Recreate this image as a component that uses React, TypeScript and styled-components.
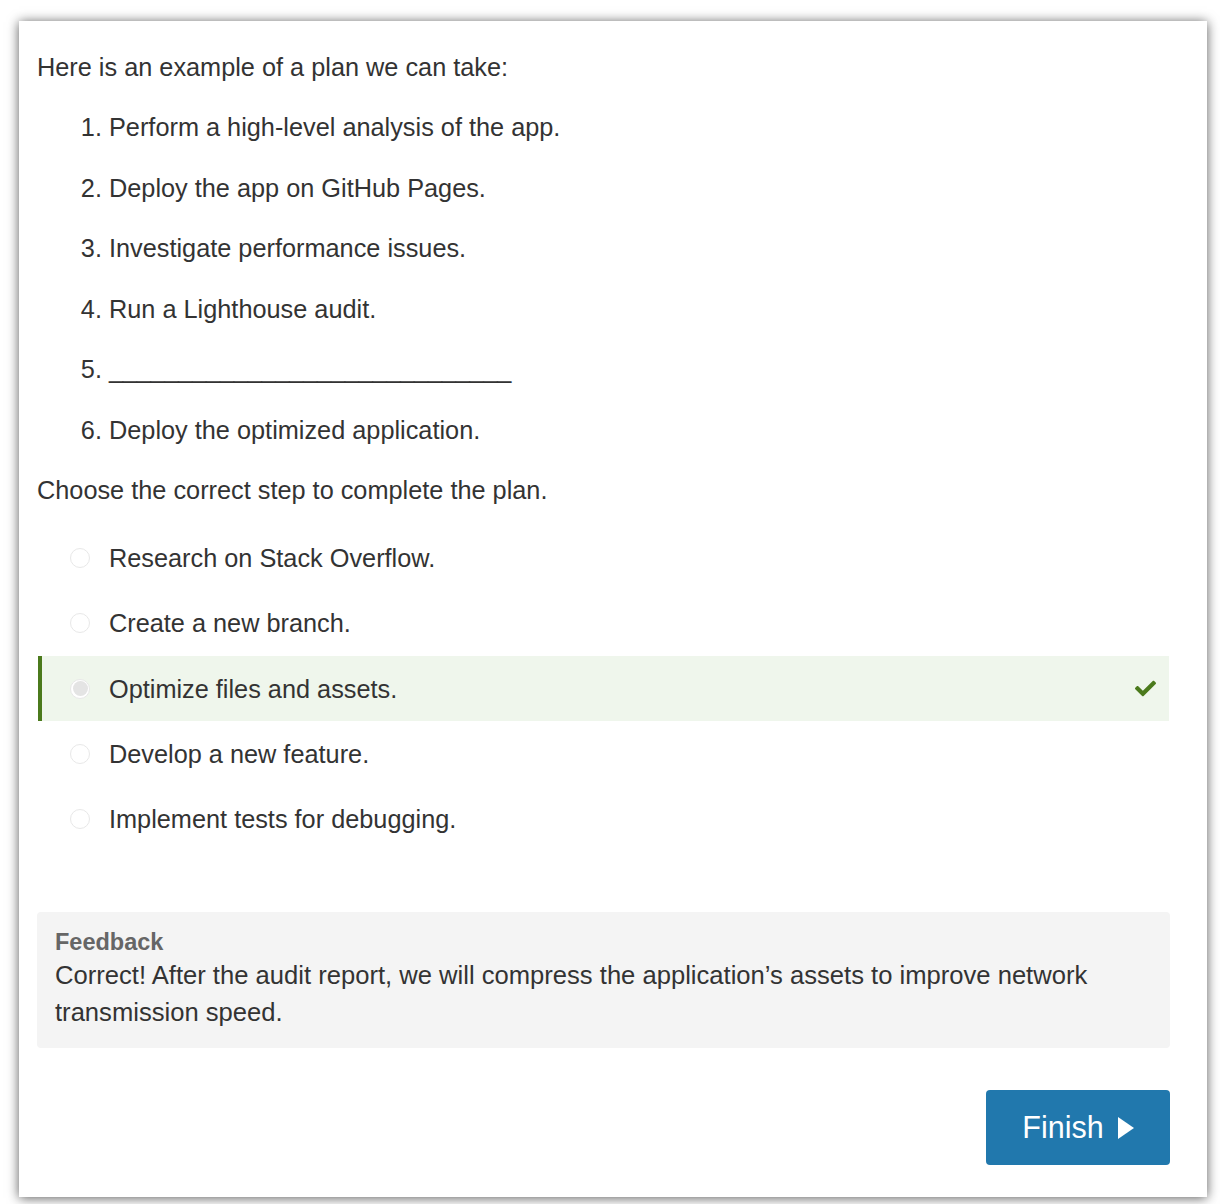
import React from 'react';
import styled, { createGlobalStyle } from 'styled-components';

// --------------- Data ---------------
const steps = [
  'Perform a high-level analysis of the app.',
  'Deploy the app on GitHub Pages.',
  'Investigate performance issues.',
  'Run a Lighthouse audit.',
  null,
  'Deploy the optimized application.',
];

const options = [
  { id: 'a', label: 'Research on Stack Overflow.', correct: false },
  { id: 'b', label: 'Create a new branch.', correct: false },
  { id: 'c', label: 'Optimize files and assets.', correct: true },
  { id: 'd', label: 'Develop a new feature.', correct: false },
  { id: 'e', label: 'Implement tests for debugging.', correct: false },
];

// --------------- Function ---------------
export default function App(): JSX.Element {
  return (
    <>
      <GlobalStyle />
      <Card_section>
        <Text_p>Here is an example of a plan we can take:</Text_p>
        <Steps_ol>
          {steps.map((step, i) => (
            <Step_li key={i}>
              {step ?? <Blank_span>_____________________________</Blank_span>}
            </Step_li>
          ))}
        </Steps_ol>
        <Text_p>Choose the correct step to complete the plan.</Text_p>

        <Options_ul>
          {options.map((opt) => (
            <Option_li key={opt.id} $correct={opt.correct}>
              <Radio_span $checked={opt.correct} />
              <OptionLabel_span>{opt.label}</OptionLabel_span>
              {opt.correct && (
                <Check_svg viewBox='0 0 512 512' aria-hidden='true'>
                  <path d='M173.9 439.4l-166.4-166.4c-10-10-10-26.2 0-36.2l36.2-36.2c10-10 26.2-10 36.2 0L192 312.7 432.1 72.6c10-10 26.2-10 36.2 0l36.2 36.2c10 10 10 26.2 0 36.2L210.1 439.4c-10 10-26.2 10-36.2 0z' />
                </Check_svg>
              )}
            </Option_li>
          ))}
        </Options_ul>

        <Feedback_div>
          <FeedbackTitle_h4>Feedback</FeedbackTitle_h4>
          <FeedbackText_p>
            Correct! After the audit report, we will compress the application’s assets to improve
            network transmission speed.
          </FeedbackText_p>
        </Feedback_div>

        <Footer_div>
          <Finish_button type='button'>
            Finish
            <Caret_svg viewBox='0 0 16 22' aria-hidden='true'>
              <path d='M0 0 L16 11 L0 22 Z' />
            </Caret_svg>
          </Finish_button>
        </Footer_div>
      </Card_section>
    </>
  );
}

// --------------- Style ---------------
const GlobalStyle = createGlobalStyle`
  html, body {
    margin: 0;
    padding: 0;
    background: #fff;
  }
  body {
    font-family: "Liberation Sans", Arial, Helvetica, sans-serif;
    color: #333;
  }
  * {
    box-sizing: border-box;
  }
`;

const Card_section = styled.section`
  width: 1188px;
  margin: 21px 0 8px 19px;
  padding: 28px 37px 32px 18px;
  background: #fff;
  box-shadow: 0 1px 11px rgba(0, 0, 0, 0.65);
  font-size: 25.3px;
  line-height: 36px;
`;

const Text_p = styled.p`
  margin: 0 0 24px;
`;

const Steps_ol = styled.ol`
  margin: 0;
  padding-left: 72px;
`;

const Step_li = styled.li`
  margin-bottom: 24.5px;
`;

const Blank_span = styled.span`
  letter-spacing: -0.2px;
`;

const Options_ul = styled.ul`
  list-style: none;
  margin: -6.5px 0 0;
  padding: 0;
`;

const Option_li = styled.li<{ $correct: boolean }>`
  display: flex;
  align-items: center;
  height: 65.3px;
  margin-left: 1px;
  margin-right: 1px;
  padding: 0 13px 0 28px;
  border-left: 4px solid ${({ $correct }) => ($correct ? '#4b7a1c' : 'transparent')};
  background: ${({ $correct }) => ($correct ? '#eff6ec' : 'transparent')};
`;

const Radio_span = styled.span<{ $checked: boolean }>`
  position: relative;
  flex: none;
  width: 20px;
  height: 20px;
  margin-right: 19px;
  border-radius: 50%;
  border: 1.5px solid #e8e8e8;
  background: #fff;
  &::after {
    content: '';
    display: ${({ $checked }) => ($checked ? 'block' : 'none')};
    position: absolute;
    inset: 1.5px;
    border-radius: 50%;
    background: #e4e4e4;
  }
`;

const OptionLabel_span = styled.span`
  flex: 1;
`;

const Check_svg = styled.svg`
  width: 21px;
  height: 21px;
  fill: #4b7a1c;
`;

const Feedback_div = styled.div`
  margin-top: 60px;
  padding: 18px 18px 17px;
  background: #f4f4f4;
  border-radius: 4px;
`;

const FeedbackTitle_h4 = styled.h4`
  margin: 0 0 3px;
  font-size: 23.5px;
  line-height: 24px;
  font-weight: 700;
  color: #666;
`;

const FeedbackText_p = styled.p`
  margin: 0;
  font-size: 25.6px;
  line-height: 37px;
`;

const Footer_div = styled.div`
  display: flex;
  justify-content: flex-end;
  margin-top: 42px;
`;

const Finish_button = styled.button`
  display: inline-flex;
  align-items: center;
  justify-content: center;
  gap: 14px;
  width: 184px;
  height: 75px;
  border: none;
  border-radius: 4px;
  background: #2178ad;
  color: #fff;
  font-family: "Liberation Sans", Arial, sans-serif;
  font-size: 30.5px;
  cursor: pointer;
`;

const Caret_svg = styled.svg`
  width: 16px;
  height: 22px;
  fill: #fff;
  margin-top: 2px;
`;
